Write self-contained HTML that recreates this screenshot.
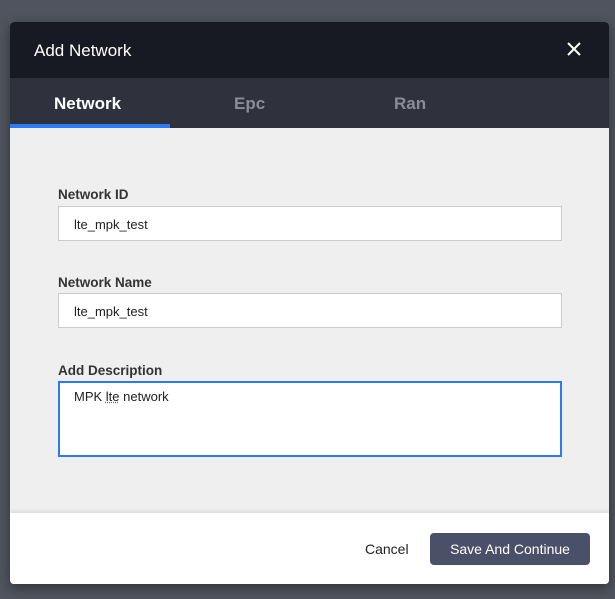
<!DOCTYPE html>
<html><head><style>
*{box-sizing:border-box;margin:0;padding:0}
body{width:615px;height:599px;background:#50545e;font-family:"Liberation Sans",sans-serif;position:relative;overflow:hidden}
.dlg{position:absolute;left:10px;top:22px;width:599px;height:562px;border-radius:4px;overflow:hidden;background:#efefef;box-shadow:0 4px 12px rgba(0,0,0,.4)}
.hd{height:56px;background:#181a23;color:#fff;font-size:17px;padding:19px 0 0 24px;position:relative}
.x{position:absolute;right:27px;top:19px}
.tabs{height:50px;background:#2f323d;position:relative}
.tab{position:absolute;top:16px;font-size:17px;font-weight:bold;color:#8a8d96}
.ul{position:absolute;left:0;bottom:0;width:160px;height:4px;background:#2c7af6}
.lbl{position:absolute;left:48px;font-size:13.5px;font-weight:bold;color:#333}
.in{position:absolute;left:48px;width:504px;background:#fff;border:1px solid #ccc;font-size:13px;color:#222;padding:10px 15px}
.ft{position:absolute;left:0;top:491px;width:599px;height:71px;background:#fff;box-shadow:0 -2px 4px rgba(0,0,0,.08)}
.btn{position:absolute;left:420px;top:20px;width:160px;height:32px;background:#4a5068;border-radius:4px;color:#fff;font-size:14px;text-align:center;line-height:32px}
.cn{position:absolute;left:355px;top:28px;font-size:14px;color:#222}
</style></head><body>
<div class="dlg">
<div class="hd">Add Network<svg class="x" width="16" height="16" viewBox="0 0 16 16"><path d="M2 2L14 14M14 2L2 14" stroke="#fff" stroke-width="2"/></svg></div>
<div class="tabs"><span class="tab" style="left:44px;color:#fff">Network</span><span class="tab" style="left:224px">Epc</span><span class="tab" style="left:384px">Ran</span><div class="ul"></div></div>
<div class="lbl" style="top:165px">Network ID</div>
<div class="in" style="top:184px;height:35px">lte_mpk_test</div>
<div class="lbl" style="top:253px">Network Name</div>
<div class="in" style="top:271px;height:35px">lte_mpk_test</div>
<div class="lbl" style="top:341px">Add Description</div>
<div class="in" style="top:359px;height:76px;border:2px solid #2c7af6;padding:6px 14px">MPK <span style="text-decoration:underline dotted #e33">lte</span> network</div>
<div class="ft"><span class="cn">Cancel</span><div class="btn">Save And Continue</div></div>
</div>
</body></html>
